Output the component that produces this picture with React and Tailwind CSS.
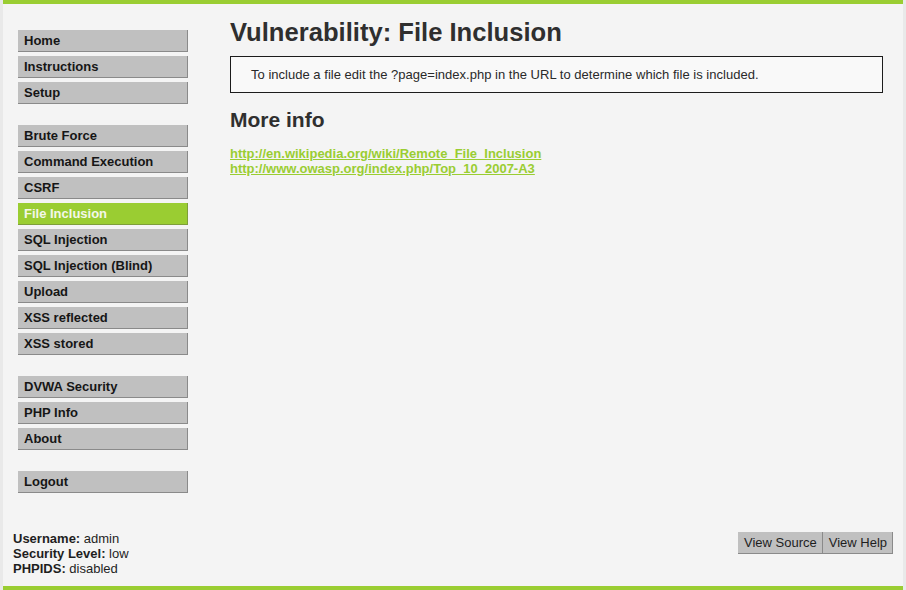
import React from "react";

const groups = [
  ["Home", "Instructions", "Setup"],
  ["Brute Force", "Command Execution", "CSRF", "File Inclusion", "SQL Injection", "SQL Injection (Blind)", "Upload", "XSS reflected", "XSS stored"],
  ["DVWA Security", "PHP Info", "About"],
  ["Logout"],
];

function MenuItem({ label }) {
  const active = label === "File Inclusion";
  return (
    <div
      className={
        "h-[22px] mb-[4px] pl-[6px] flex items-center text-[13px] font-bold border-r border-b " +
        (active
          ? "bg-[#9acd32] text-[#f4f7ea] border-[#7e9e3a]"
          : "bg-[#c0c0c0] text-[#161616] border-[#8a8a8a]")
      }
    >
      {label}
    </div>
  );
}

export default function App() {
  return (
    <div
      className="w-[906px] h-[590px] bg-[#e9e9e9] px-[3px] overflow-hidden"
      style={{ fontFamily: '"Liberation Sans", Arial, sans-serif' }}
    >
      <div className="h-full bg-[#f4f4f4] flex flex-col border-t-4 border-[#9acd32]">
        <div className="flex flex-1">
          <div className="w-[170px] ml-[15px] mt-[26px] flex flex-col gap-[17px]">
            {groups.map((g, i) => (
              <div key={i}>
                {g.map((l) => (
                  <MenuItem key={l} label={l} />
                ))}
              </div>
            ))}
          </div>
          <div className="ml-[42px] w-[653px] mt-[14px]">
            <h1 className="text-[25.6px] font-bold text-[#2f2f2f] leading-[29px]">
              Vulnerability: File Inclusion
            </h1>
            <div className="mt-[9px] border border-[#1c1c1c] bg-[#f9f9f9] h-[37px] pl-[20px] flex items-center text-[13px] text-[#2a2a2a] tracking-[0.02px]">
              To include a file edit the ?page=index.php in the URL to determine which file is included.
            </div>
            <h2 className="mt-[15px] text-[21px] font-bold text-[#2f2f2f] leading-[24px]">More info</h2>
            <div className="mt-[14px] flex flex-col text-[13px] leading-[15px] font-bold">
              <a className="text-[#9acd32] underline w-fit" href="#">
                http://en.wikipedia.org/wiki/Remote_File_Inclusion
              </a>
              <a className="text-[#9acd32] underline w-fit" href="#">
                http://www.owasp.org/index.php/Top_10_2007-A3
              </a>
            </div>
          </div>
        </div>
        <div className="flex items-start justify-between pl-[10px] pr-[10px] pb-[10px]">
          <div className="text-[13px] leading-[15px] text-[#1e1e1e]">
            <div><b>Username:</b> admin</div>
            <div><b>Security Level:</b> low</div>
            <div><b>PHPIDS:</b> disabled</div>
          </div>
          <div className="flex mt-[1px]">
            <div className="h-[22px] pl-[6px] pr-[5px] flex items-center bg-[#c0c0c0] border-r border-b border-[#8a8a8a] text-[13px] text-[#1e1e1e]">
              View Source
            </div>
            <div className="h-[22px] pl-[6px] pr-[5px] flex items-center bg-[#c0c0c0] border-r border-b border-[#8a8a8a] text-[13px] text-[#1e1e1e]">
              View Help
            </div>
          </div>
        </div>
        <div className="h-[4px] bg-[#9acd32]" />
      </div>
    </div>
  );
}
